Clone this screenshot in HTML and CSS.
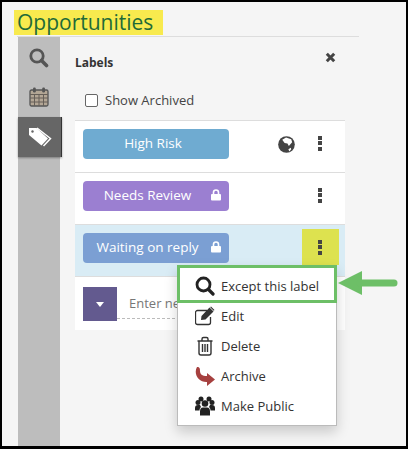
FILE: index.html
```html
<!DOCTYPE html>
<html>
  <head>
    <title>Opportunities</title>
    <meta charset="utf-8" />
    <link rel="stylesheet" href="styles.css">
  </head>
  <body>
    <div class="frame">
      <div class="page-title"><h1>Opportunities</h1></div>
      <div class="content">
        <div class="sidebar">
          <div class="side-tab first">
            <svg width="20" height="20" viewBox="0 0 20 20"><circle cx="8" cy="8" r="6.200" fill="none" stroke="#555" stroke-width="2.800"/><path d="M12.500 12.500L17.500 17.500" stroke="#555" stroke-width="3.600" stroke-linecap="round"/></svg>
          </div>
          <div class="side-tab">
            <svg width="20" height="20" viewBox="0 0 20 20"><rect x="1" y="3" width="18" height="16" rx="1.500" fill="#b3a695" stroke="#555" stroke-width="1.300"/><path d="M1 7.500h18M1 11h18M1 15h18M5.500 7.500V19M10 7.500V19M14.500 7.500V19" stroke="#665f58" stroke-width="1"/><rect x="4" y="0.500" width="2.800" height="5" rx="1.200" fill="#555"/><rect x="13.200" y="0.500" width="2.800" height="5" rx="1.200" fill="#555"/></svg>
          </div>
          <div class="side-tab active">
            <svg width="24" height="20" viewBox="0 0 24 20"><path d="M9 1l13.500 10.500-7 7.500" fill="none" stroke="#fff" stroke-width="1.500"/><path d="M1 1h7.500l11.500 10.500-6.500 7L1 8z" fill="#fff"/><circle cx="4.500" cy="4.500" r="1.200" fill="#666"/></svg>
          </div>
        </div>
        <div class="panel">
          <div class="panel-head">
            <h2>Labels</h2>
            <svg class="close-icon" width="11" height="11" viewBox="0 0 11 11"><path d="M1.800 1.800l7.400 7.400M9.200 1.800L1.800 9.200" stroke="#444" stroke-width="3"/></svg>
          </div>
          <label class="archived"><span class="check"></span>Show Archived</label>
          <div class="label-list">
            <div class="label-row">
              <span class="label-pill pill-blue">High Risk</span>
              <svg class="globe" width="17" height="17" viewBox="0 0 18 18"><circle cx="9" cy="9" r="8.800" fill="#444"/><path d="M4.500 4l4-2.500 5.500 2 1 3-3.500 4-1.500-2.500-3-.5zM11 14l2.500-1.500.5 1.500-2 2.500z" fill="#fff"/></svg>
              <span class="row-menu"><i></i><i></i><i></i></span>
            </div>
            <div class="label-row">
              <span class="label-pill pill-purple">Needs Review<svg class="lock" width="10" height="12" viewBox="0 0 10 12"><path d="M2.500 5V3.500a2.500 2.500 0 0 1 5 0V5" fill="none" stroke="#fff" stroke-width="1.600"/><rect y="5" width="10" height="6.500" rx="1" fill="#fff"/></svg></span>
              <span class="row-menu"><i></i><i></i><i></i></span>
            </div>
            <div class="label-row selected">
              <span class="label-pill pill-slate">Waiting on reply<svg class="lock" width="10" height="12" viewBox="0 0 10 12"><path d="M2.500 5V3.500a2.500 2.500 0 0 1 5 0V5" fill="none" stroke="#fff" stroke-width="1.600"/><rect y="5" width="10" height="6.500" rx="1" fill="#fff"/></svg></span>
              <span class="row-menu highlight"><i></i><i></i><i></i></span>
            </div>
            <div class="new-row">
              <span class="color-btn"><span class="caret"></span></span>
              <span class="new-input">Enter new label</span>
            </div>
          </div>
        </div>
      </div>

      <ul class="menu">
        <li class="menu-item focus">
          <svg width="20" height="20" viewBox="0 0 20 20"><circle cx="8.500" cy="8.500" r="6.500" fill="none" stroke="#222" stroke-width="2.800"/><path d="M13.500 13.500l4.500 4.500" stroke="#222" stroke-width="3.200" stroke-linecap="round"/></svg>
          Except this label
        </li>
        <li class="menu-item">
          <svg width="20" height="20" viewBox="0 0 20 20"><path d="M15.500 11v5.500a2 2 0 0 1-2 2h-11a2 2 0 0 1-2-2v-10a2 2 0 0 1 2-2H12" fill="none" stroke="#333" stroke-width="1.300"/><path d="M6.500 10l8-8.500 4 4-8 8-4.500.5zM16 .5l3.500 3.500-.8.8-3.500-3.500z" fill="#333"/></svg>
          Edit
        </li>
        <li class="menu-item">
          <svg width="20" height="20" viewBox="0 0 20 20"><path d="M4 5.500V17a2 2 0 0 0 2 2h8a2 2 0 0 0 2-2V5.500M2.500 5h15M7 5V3a1.500 1.500 0 0 1 1.500-1.500h3A1.500 1.500 0 0 1 13 3v2" fill="none" stroke="#333" stroke-width="1.400"/><path d="M7.500 8v8M10 8v8M12.500 8v8" stroke="#333" stroke-width="1.400"/></svg>
          Delete
        </li>
        <li class="menu-item">
          <svg width="20" height="20" viewBox="0 0 20 20"><path d="M2 1C5 1 5 3 5 5c0 3 2 5 7 5V7l8 6.500-8 6.500v-4C4 16.500-2 8 2 1z" fill="#a6403f"/></svg>
          Archive
        </li>
        <li class="menu-item">
          <svg width="20" height="20" viewBox="0 0 20 20"><g fill="#222"><circle cx="3" cy="6.500" r="2.500"/><circle cx="17" cy="6.500" r="2.500"/><circle cx="6" cy="3" r="2.500"/><circle cx="14" cy="3" r="2.500"/><circle cx="10" cy="7.500" r="3.300"/><path d="M0 14.500V12c0-2 1-3 3-3h2l1 2c-1 1-1.500 2-1.500 3.500zM20 14.500V12c0-2-1-3-3-3h-2l-1 2c1 1 1.500 2 1.500 3.500zM5 19.500v-4C5 13 6 11.500 8 11.500h4c2 0 3 1.500 3 4v4z"/></g></svg>
          Make Public
        </li>
      </ul>

      <svg class="callout-arrow" width="60" height="26" viewBox="0 0 60 26"><path d="M0 13L24 1v24z" fill="#6dbf67"/><path d="M22 13h34" stroke="#6dbf67" stroke-width="7" stroke-linecap="round"/></svg>
    </div>
  </body>
</html>
```

FILE: styles.css
```css
* {
  box-sizing: border-box;
}

html,
body {
  margin: 0;
  padding: 0;
}

body {
  font-family: "Open Sans", "Noto Sans", Arial, sans-serif;
  color: #333;
}

.frame {
  position: relative;
  width: 408px;
  height: 449px;
  overflow: hidden;
  display: flex;
  flex-direction: column;
  background: #f5f5f5;
  border: solid #000;
  border-width: 2px 2px 3px 2px;
}

/* Header */

.page-title {
  height: 34px;
  padding: 8px 0 0 12px;
}

h1 {
  display: inline-block;
  width: 149px;
  height: 25px;
  margin: 0;
  padding-left: 3px;
  font-size: 21px;
  line-height: 25px;
  font-weight: 400;
  color: #1f6b38;
  background: #f8ea4e;
}

.content {
  flex: 1;
  display: flex;
  width: 342px;
  margin-left: 15px;
  border-top: 1px solid #ddd;
  min-height: 0;
}

/* Sidebar */

.sidebar {
  width: 42px;
  margin-left: 1px;
  background: #bdbdbd;
  display: flex;
  flex-direction: column;
}

.side-tab {
  height: 40px;
  display: flex;
  align-items: center;
  justify-content: center;
}

.side-tab.first {
  padding-top: 2px;
}

.side-tab.active {
  width: 44px;
  background: #666;
  border-right: 1px solid #333;
  box-shadow: 0 1px 2px rgba(0, 0, 0, 0.35);
}

/* Panel */

.panel {
  flex: 1;
  padding: 0 14px 0 15px;
}

.panel-head {
  display: flex;
  justify-content: space-between;
  align-items: center;
  height: 44px;
  padding: 0 9px 0 0;
}

h2 {
  margin: 6px 0 0;
  font-size: 12px;
  font-weight: 700;
  color: #333;
}

.close-icon {
  margin-bottom: 4px;
}

.archived {
  display: flex;
  align-items: flex-start;
  height: 40px;
  padding: 10px 0 0 10px;
  font-size: 13px;
  line-height: 18px;
  color: #444;
  border-bottom: 1px solid #ddd;
}

.check {
  width: 13px;
  height: 13px;
  margin: 3px 7px 0 0;
  background: #fff;
  border: 1px solid #666;
  border-radius: 2px;
}

.label-list {
  width: 270px;
  background: #fff;
}

.label-row {
  position: relative;
  height: 52px;
  padding: 8px 0 0 8px;
  border-bottom: 1px solid #ddd;
}

.label-row.selected {
  background: #d9ecf5;
}

.label-pill {
  position: relative;
  display: block;
  width: 146px;
  height: 30px;
  padding-right: 6px;
  font-size: 13.5px;
  line-height: 29px;
  text-align: center;
  color: #fff;
  border-radius: 4px;
}

.pill-blue {
  background: #6fabd1;
}

.pill-purple {
  background: #9b7fd1;
  padding-right: 17px;
}

.pill-slate {
  background: #7b9fd3;
  padding-right: 17px;
}

.lock {
  position: absolute;
  right: 8px;
  top: 8px;
}

.globe {
  position: absolute;
  left: 203px;
  top: 15px;
}

.row-menu {
  position: absolute;
  left: 227px;
  top: 4px;
  width: 37px;
  height: 36px;
  padding-right: 1px;
  display: flex;
  flex-direction: column;
  align-items: center;
  justify-content: center;
  gap: 1.500px;
}

.row-menu i {
  display: block;
  width: 4px;
  height: 4px;
  background: #444;
}

.row-menu.highlight {
  background: #dde24f;
}

.new-row {
  display: flex;
  align-items: flex-start;
  height: 53px;
  padding: 10px 0 0 8px;
}

.color-btn {
  display: flex;
  align-items: center;
  justify-content: center;
  width: 34px;
  height: 34px;
  background: #635a8f;
}

.caret {
  width: 0;
  height: 0;
  border-top: 5px solid #fff;
  border-left: 4px solid transparent;
  border-right: 4px solid transparent;
}

.new-input {
  flex: 1;
  height: 32px;
  padding: 0 0 0 12px;
  font-size: 13px;
  line-height: 32px;
  color: #777;
  border-bottom: 1px dashed #bbb;
  white-space: nowrap;
  overflow: hidden;
  margin-right: 10px;
}

/* Context menu */

.menu {
  position: absolute;
  left: 175px;
  top: 263px;
  width: 160px;
  height: 161px;
  margin: 0;
  padding: 0;
  list-style: none;
  background: #fff;
  border: 1px solid #bbb;
  box-shadow: 0 6px 12px rgba(0, 0, 0, 0.18);
}

.menu-item {
  display: flex;
  align-items: center;
  gap: 6px;
  height: 30px;
  padding-left: 17px;
  font-size: 13px;
  color: #333;
}

.menu-item.focus {
  height: 38px;
  margin: -1px -1px -2px;
  padding: 4px 0 0 15px;
  border: 3px solid #6dbf67;
  background: #fff;
}

.callout-arrow {
  position: absolute;
  left: 336px;
  top: 268px;
}
```
